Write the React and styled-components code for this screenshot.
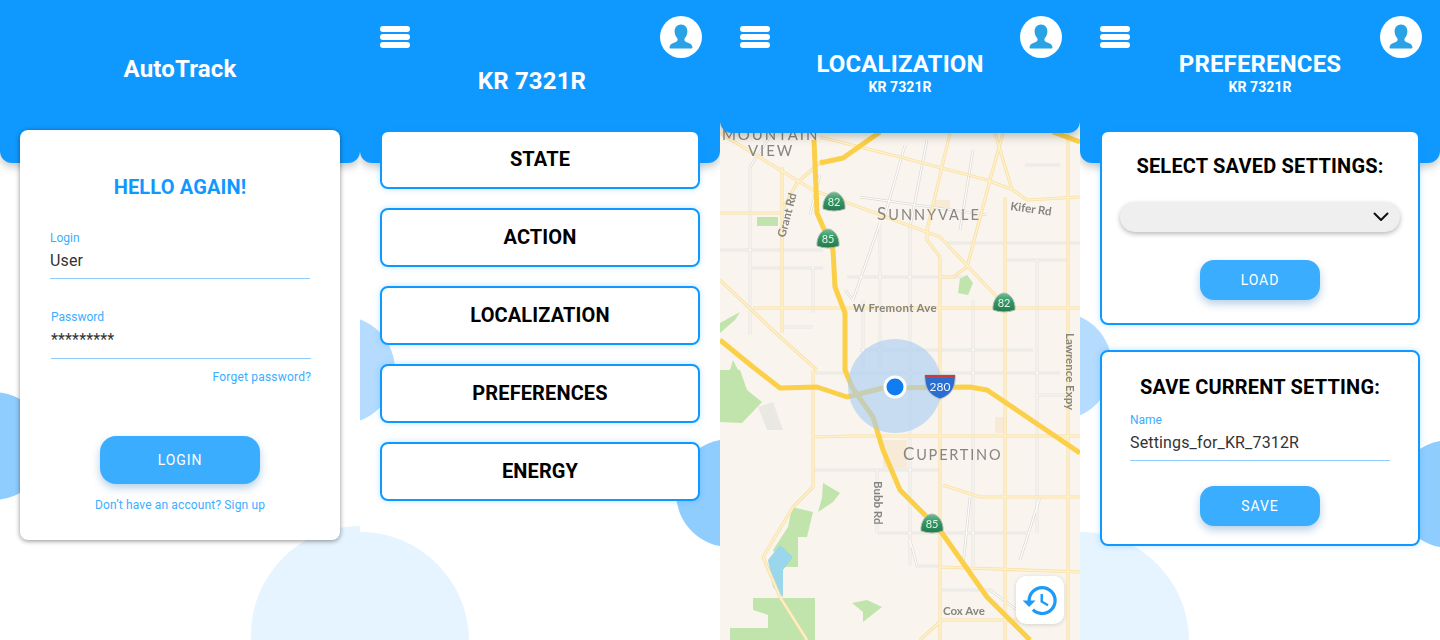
import React from 'react';
import styled, { createGlobalStyle } from 'styled-components';
import { MdHistory } from 'react-icons/md';

const blue = '#0f99ff';
const softBlue = '#3badff';

const GlobalStyle = createGlobalStyle`
  html, body { margin: 0; padding: 0; background: #fff; }
  body { font-family: Roboto, "Liberation Sans", sans-serif; }
`;

const Page = styled.div`
  display: grid;
  grid-template-columns: repeat(4, 360px);
  width: 1440px;
  height: 640px;
  overflow: hidden;
`;

const Screen = styled.section`
  position: relative;
  display: flex;
  flex-direction: column;
  height: 640px;
  overflow: hidden;
  background: #fff;
`;

const Blob = styled.div`
  position: absolute;
  left: ${p => p.$x - p.$r}px;
  top: ${p => p.$y - p.$r}px;
  width: ${p => p.$r * 2}px;
  height: ${p => p.$r * 2}px;
  border-radius: 50%;
  background: ${p => p.$color};
`;

const Header = styled.header`
  position: relative;
  z-index: 1;
  flex: none;
  box-sizing: border-box;
  height: ${p => p.$height || 163}px;
  display: grid;
  grid-template-columns: 1fr auto 1fr;
  padding: 16px 18px 0;
  background: ${blue};
  border-radius: 0 0 12px 12px;
  box-shadow: 0 4px 8px rgba(0, 0, 0, 0.22);
  color: #fff;
`;

const MenuButton = styled.div`
  display: flex;
  flex-direction: column;
  gap: 2px;
  width: 30px;
  margin: 10px 0 0 2px;
  align-self: start;
`;

const MenuBar = styled.span`
  height: 6px;
  border-radius: 3px;
  background: #fff;
`;

const Avatar = styled.div`
  grid-column: 3;
  justify-self: end;
  align-self: start;
  width: 42px;
  height: 42px;
  border-radius: 50%;
  background: #fff;
  display: flex;
  align-items: center;
  justify-content: center;
`;

const TitleBlock = styled.div`
  grid-column: 2;
  padding-top: ${p => p.$top}px;
  padding-right: ${p => p.$shift || 0}px;
  text-align: center;
`;

const Title = styled.h1`
  margin: 0;
  font-size: 24px;
  line-height: 28px;
  font-weight: 700;
  letter-spacing: 0.15px;
`;

const Subtitle = styled.div`
  font-size: 14px;
  line-height: 18px;
  font-weight: 700;
  letter-spacing: 0.1px;
`;

const Body = styled.div`
  position: relative;
  z-index: 2;
  display: flex;
  flex-direction: column;
  margin: -33px 20px 0;
`;

const LoginCard = styled.div`
  box-sizing: border-box;
  height: 410px;
  padding: 46px 30px 0;
  background: #fff;
  border-radius: 8px;
  box-shadow: 0 1px 5px rgba(0, 0, 0, 0.45);
  display: flex;
  flex-direction: column;
`;

const Hello = styled.h2`
  margin: 0 0 32px;
  font-size: 20px;
  line-height: 23px;
  font-weight: 700;
  letter-spacing: 0.15px;
  color: ${blue};
  text-align: center;
`;

const Field = styled.div`
  margin: 0 ${p => (p.$nudge ? -1 : 0)}px ${p => p.$bottom || 0}px ${p => p.$nudge || 0}px;
  border-bottom: 1px solid #8fcdff;
  height: ${p => p.$height || 48}px;
  box-sizing: border-box;
`;

const FieldLabel = styled.div`
  font-size: 12px;
  line-height: 14px;
  color: ${softBlue};
`;

const FieldValue = styled.div`
  margin-top: 6px;
  font-size: 16px;
  line-height: 20px;
  letter-spacing: 0.15px;
  color: #333;
`;

const ForgetLink = styled.a`
  margin: 10px -1px 0 0;
  font-size: 12px;
  line-height: 16px;
  letter-spacing: 0.2px;
  color: ${softBlue};
  text-align: right;
`;

const PrimaryButton = styled.button`
  display: block;
  align-self: center;
  width: ${p => p.$width}px;
  height: ${p => p.$height}px;
  margin: ${p => p.$top || 0}px auto 0;
  padding: 0;
  border: 0;
  border-radius: ${p => p.$radius}px;
  background: ${softBlue};
  color: #fff;
  font-family: inherit;
  font-size: 14px;
  font-weight: 400;
  letter-spacing: 0.9px;
  box-shadow: 0 4px 8px rgba(15, 100, 170, 0.3);
`;

const SignUp = styled.a`
  margin-top: 13px;
  font-size: 12px;
  line-height: 16px;
  letter-spacing: 0.14px;
  color: ${softBlue};
  text-align: center;
`;

const NavList = styled.nav`
  display: flex;
  flex-direction: column;
  gap: 19px;
`;

const NavItem = styled.button`
  box-sizing: border-box;
  height: 59px;
  padding: 0 0 2px;
  background: #fff;
  border: 2px solid ${blue};
  border-radius: 8px;
  box-shadow: 0 0 6px rgba(15, 153, 255, 0.25);
  font-family: inherit;
  font-size: 20px;
  font-weight: 700;
  letter-spacing: 0.12px;
  color: #000;
`;

const SettingsCard = styled.div`
  box-sizing: border-box;
  height: ${p => p.$height}px;
  margin-bottom: ${p => p.$bottom || 0}px;
  padding: ${p => p.$top}px 18px 0;
  background: #fff;
  border: 2px solid ${blue};
  border-radius: 8px;
  box-shadow: 0 0 6px rgba(15, 153, 255, 0.25);
  display: flex;
  flex-direction: column;
`;

const CardHeading = styled.h3`
  margin: 0;
  font-size: 20px;
  line-height: 24px;
  font-weight: 700;
  letter-spacing: 0.2px;
  color: #000;
  text-align: center;
`;

const SelectBox = styled.div`
  height: 30px;
  margin-top: 24px;
  padding-right: 11px;
  display: flex;
  align-items: center;
  justify-content: flex-end;
  border-radius: 15px;
  background: #efefef;
  box-shadow: 0 2px 5px rgba(0, 0, 0, 0.28);
`;

const NameField = styled.div`
  margin: 14px 10px 0;
  height: 48px;
  box-sizing: border-box;
  border-bottom: 1px solid #8fcdff;
`;

const MapArea = styled.div`
  position: relative;
  flex: 1;
  margin-top: -12px;
  background: #f9f5ee;
`;

const MapSvg = styled.svg`
  display: block;
  width: 360px;
  height: 519px;
  filter: blur(0.45px);
`;

const HistoryButton = styled.button`
  position: absolute;
  right: 16px;
  bottom: 16px;
  width: 48px;
  height: 48px;
  padding: 0;
  border: 0;
  border-radius: 10px;
  background: #fff;
  color: #1f9bf7;
  display: flex;
  align-items: center;
  justify-content: center;
  box-shadow: 0 1px 4px rgba(0, 0, 0, 0.15);
`;

const MapText = styled.text`
  font-family: Lato, "Liberation Sans", sans-serif;
  fill: ${p => p.$fill || '#868582'};
  font-size: ${p => p.$size}px;
  letter-spacing: ${p => p.$spacing || 0}px;
  font-weight: ${p => p.$weight || 400};
`;

function HeaderContent({ title, subtitle, top, shift }) {
  return (
    <>
      <MenuButton>
        <MenuBar />
        <MenuBar />
        <MenuBar />
      </MenuButton>
      <TitleBlock $top={top} $shift={shift}>
        <Title>{title}</Title>
        {subtitle && <Subtitle>{subtitle}</Subtitle>}
      </TitleBlock>
      <Avatar>
        <svg width="32" height="32" viewBox="0 0 32 32">
          <path
            fill="#29a3e5"
            d="M16 3.500c-4 0-6.400 3-6.400 6.800 0 2.800 1 5.200 2.500 6.800.5.6.6 1.200.5 2-.2 1.300-1.300 1.900-3 2.500-2.600.9-4.600 1.700-5.100 4.700-.1.6.2 1.200.9 1.200h21.200c.7 0 1-.6.9-1.200-.5-3-2.500-3.800-5.100-4.700-1.700-.6-2.800-1.200-3-2.500-.1-.8 0-1.400.5-2 1.500-1.600 2.500-4 2.500-6.800 0-3.800-2.400-6.800-6.400-6.800z"
          />
        </svg>
      </Avatar>
    </>
  );
}

// everything below is in page coordinates of the phone: x 0-360, y 121-640
const minorRoads = [
  'M30 167V335', 'M93 267V313', 'M143 300V370', 'M160 223V370', 'M190 227V566', 'M253 300V566', 'M317 260V533',
  'M0 250H103', 'M30 268H103', 'M127 277H243', 'M63 327H93', 'M227 243H360', 'M140 197L267 215', 'M287 260H347',
  'M140 350H313', 'M93 470H220', 'M157 533H310', 'M95 373H340', 'M317 395H347', 'M157 470V533', 'M190 540L197 566H222',
  'M160 223L133 300', 'M185 145L165 215', 'M207 140L190 227', 'M253 150L240 230', 'M305 165H340', 'M30 167L52 133',
  'M250 497L243 566', 'M320 497L300 560', 'M222 590H270L300 612', 'M125 290L133 300', 'M100 175L90 215'
];

const arterials = [
  'M0 133L93 190L220 237L277 297', 'M100 137L180 157L267 180L293 190L307 200L360 197', 'M0 213H60', 'M33 308H360',
  'M95 437L130 436H360', 'M223 485L260 497L360 497', 'M220 567L360 572', 'M62 167V333', 'M220 257V640', 'M285 197V640',
  'M348 133V640', 'M93 370V487L73 507L43 557L60 597L87 640', 'M283 133L270 180L247 267L233 277H220',
  'M230 133L207 230V240L220 257', 'M0 280L60 337L97 370', 'M103 160L77 183L62 210', 'M200 640L222 620H300', 'M275 133L292 190'
];

const highways = [
  'M94 140L97 213L113 250L115 287L125 313L125 370L132 387L153 417L163 450L180 490L207 517L222 533L267 597L310 640',
  'M0 340L33 367L60 388L97 387L127 397L163 388L250 387L267 390L360 453',
  'M100 163L123 158L160 132',
  'M333 132L360 142'
];

const parks = [
  'M0 370H20L27 390L42 402L22 423L0 422Z', 'M103 483L120 493L113 502L98 512L102 498Z',
  'M72 507L93 512L87 537H78V567H63L53 550L68 527Z', 'M33 598H95V640H10V628H48V615L33 610Z',
  'M132 603L147 600L162 607L143 622V612Z', 'M37 217H58V226H37Z', 'M240 278L247 275L253 283L248 295L238 293Z',
  'M0 323L20 312L15 320L0 333Z', 'M13 360L18 370H10Z'
];

const shields = [
  { x: 114, y: 202, label: '82' },
  { x: 108, y: 239, label: '85' },
  { x: 284, y: 303, label: '82' },
  { x: 212, y: 524, label: '85' }
];

function CityMap() {
  return (
    <MapSvg viewBox="0 121 360 519">
      <defs>
        <linearGradient id="shield" x1="0" y1="0" x2="0" y2="1">
          <stop offset="0" stopColor="#74bd98" />
          <stop offset="0.4" stopColor="#359a66" />
          <stop offset="1" stopColor="#24794c" />
        </linearGradient>
      </defs>
      <rect x="0" y="121" width="360" height="519" fill="#f9f5ee" />
      <path d="M163 440h24v28h-24zM275 417h12v16h-12zM215 200h15v8h-15z" fill="#f7ead6" />
      <path d="M38 407l15-5 10 28H47z" fill="#e9e8e2" />
      {parks.map(d => <path key={d} d={d} fill="#c0e4ab" />)}
      <path d="M60 545L73 557L63 570V597L53 587L48 560Z" fill="#9ad6ec" />
      {minorRoads.map(d => <path key={d} d={d} fill="none" stroke="#dcd9d3" strokeWidth="2.600" />)}
      {minorRoads.map(d => <path key={d} d={d} fill="none" stroke="#fff" strokeWidth="1.200" />)}
      {arterials.map(d => <path key={d} d={d} fill="none" stroke="#f8dfab" strokeWidth="3.200" strokeLinejoin="round" />)}
      {arterials.map(d => <path key={d} d={d} fill="none" stroke="#fff2c9" strokeWidth="1.500" strokeLinejoin="round" />)}
      {highways.map(d => <path key={d} d={d} fill="none" stroke="#fbcf47" strokeWidth="5" strokeLinejoin="round" />)}

      <MapText x="2" y="140" $size="15" $spacing="1.900">MOUNTAIN</MapText>
      <MapText x="28" y="156" $size="15" $spacing="1.900">VIEW</MapText>
      <MapText x="157" y="220" $size="14.500" $spacing="2"><tspan fontSize="17">S</tspan>UNNYVALE</MapText>
      <MapText x="183" y="460" $size="14.500" $spacing="1.800"><tspan fontSize="17">C</tspan>UPERTINO</MapText>
      <MapText x="133" y="312" $size="11.500" $spacing="0.3" $weight={700}>W Fremont Ave</MapText>
      <MapText x="290" y="210" $size="11.500" $weight={700} transform="rotate(8 290 210)">Kifer Rd</MapText>
      <MapText x="65" y="238" $size="11.500" $weight={700} transform="rotate(-75 65 238)">Grant Rd</MapText>
      <MapText x="154" y="481" $size="11.500" $weight={700} transform="rotate(90 154 481)">Bubb Rd</MapText>
      <MapText x="346" y="333" $size="11.500" $weight={700} transform="rotate(90 346 333)">Lawrence Expy</MapText>
      <MapText x="223" y="615" $size="11.500" $weight={700}>Cox Ave</MapText>

      <circle cx="175" cy="386" r="47" fill="#a8cdf2" fillOpacity="0.62" />

      {shields.map(s => (
        <g key={`${s.x}-${s.y}`} transform={`translate(${s.x} ${s.y})`}>
          <path d="M-11 7C-12-2-6-10 0-10C6-10 12-2 11 7Q0 11-11 7Z" fill="url(#shield)" stroke="#b4bcb6" strokeWidth="1" />
          <MapText x="0" y="4" $size="11" $fill="#e6f3ea" textAnchor="middle">{s.label}</MapText>
        </g>
      ))}
      <g transform="translate(220 386)">
        <path d="M-15-11H15C16 0 12 9 0 13-12 9-16 0-15-11Z" fill="#2a6fd0" stroke="#b9bec6" strokeWidth="1" />
        <path d="M-15-11H15V-8H-15Z" fill="#cf3a3a" />
        <MapText x="0" y="5" $size="12" $fill="#eef5ff" textAnchor="middle">280</MapText>
      </g>
      <circle cx="175" cy="387" r="10" fill="#0f7cf0" stroke="#fff" strokeWidth="3" />
    </MapSvg>
  );
}

export default function App() {
  return (
    <Page>
      <GlobalStyle />

      <Screen>
        <Blob $x={-7} $y={446} $r={54} $color="#8fcdff" />
        <Blob $x={360} $y={635} $r={109} $color="#e5f4ff" />
        <Header>
          <TitleBlock $top={39}>
            <Title>AutoTrack</Title>
          </TitleBlock>
        </Header>
        <Body>
          <LoginCard>
            <Hello>HELLO AGAIN!</Hello>
            <Field $bottom={31}>
              <FieldLabel>Login</FieldLabel>
              <FieldValue>User</FieldValue>
            </Field>
            <Field $nudge={1} $height={49}>
              <FieldLabel>Password</FieldLabel>
              <FieldValue>*********</FieldValue>
            </Field>
            <ForgetLink>Forget password?</ForgetLink>
            <PrimaryButton $width={160} $height={48} $radius={16} $top={51}>LOGIN</PrimaryButton>
            <SignUp>Don’t have an account? Sign up</SignUp>
          </LoginCard>
        </Body>
      </Screen>

      <Screen>
        <Blob $x={-19} $y={370} $r={54} $color="#b5dcff" />
        <Blob $x={370} $y={493} $r={54} $color="#8fcdff" />
        <Blob $x={0} $y={641} $r={109} $color="#e5f4ff" />
        <Header>
          <HeaderContent title="KR 7321R" top={51} shift={16} />
        </Header>
        <Body>
          <NavList>
            <NavItem>STATE</NavItem>
            <NavItem>ACTION</NavItem>
            <NavItem>LOCALIZATION</NavItem>
            <NavItem>PREFERENCES</NavItem>
            <NavItem>ENERGY</NavItem>
          </NavList>
        </Body>
      </Screen>

      <Screen>
        <Header $height={133}>
          <HeaderContent title="LOCALIZATION" subtitle="KR 7321R" top={34} />
        </Header>
        <MapArea>
          <CityMap />
          <HistoryButton>
            <MdHistory size={39} />
          </HistoryButton>
        </MapArea>
      </Screen>

      <Screen>
        <Blob $x={-22} $y={366} $r={54} $color="#b5dcff" />
        <Blob $x={370} $y={494} $r={54} $color="#8fcdff" />
        <Blob $x={0} $y={641} $r={109} $color="#e5f4ff" />
        <Header>
          <HeaderContent title="PREFERENCES" subtitle="KR 7321R" top={34} />
        </Header>
        <Body>
          <SettingsCard $height={195} $bottom={25} $top={22}>
            <CardHeading>SELECT SAVED SETTINGS:</CardHeading>
            <SelectBox>
              <svg width="16" height="10" viewBox="0 0 16 10">
                <path d="M1.500 1.500L8 8L14.500 1.500" fill="none" stroke="#111" strokeWidth="2" strokeLinecap="round" strokeLinejoin="round" />
              </svg>
            </SelectBox>
            <PrimaryButton $width={120} $height={40} $radius={14} $top={28}>LOAD</PrimaryButton>
          </SettingsCard>
          <SettingsCard $height={196} $top={23}>
            <CardHeading>SAVE CURRENT SETTING:</CardHeading>
            <NameField>
              <FieldLabel>Name</FieldLabel>
              <FieldValue>Settings_for_KR_7312R</FieldValue>
            </NameField>
            <PrimaryButton $width={120} $height={40} $radius={14} $top={25}>SAVE</PrimaryButton>
          </SettingsCard>
        </Body>
      </Screen>
    </Page>
  );
}
